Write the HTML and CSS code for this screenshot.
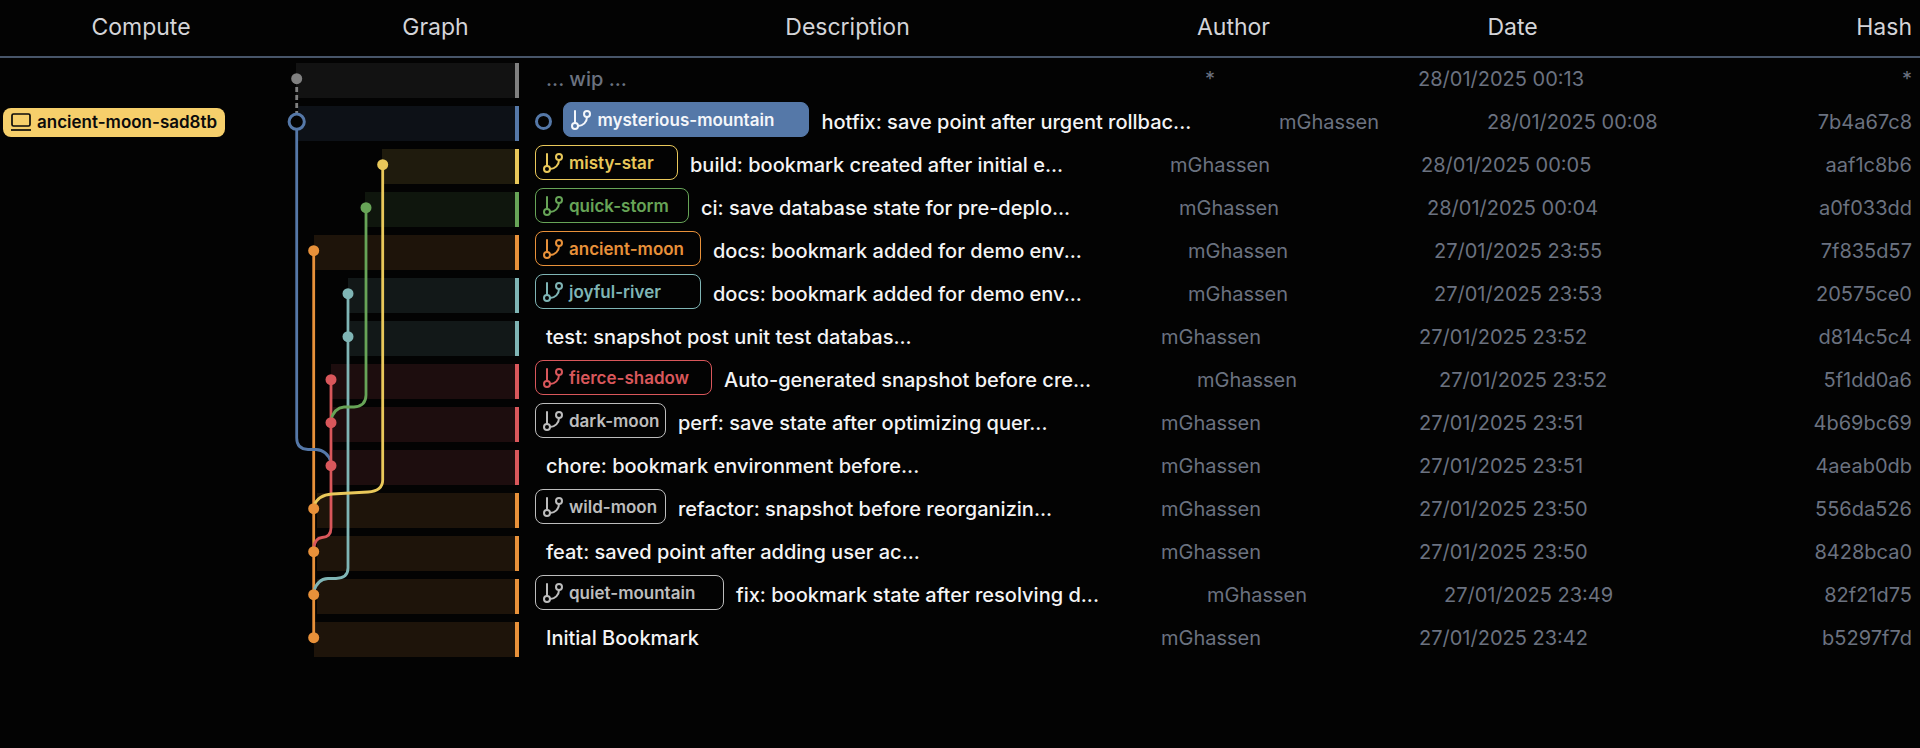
FILE: index.html
```html
<!DOCTYPE html>
<html lang="en">
<head>
<meta charset="utf-8">
<title>Bookmarks</title>
<link rel="stylesheet" href="styles.css">
</head>
<body>
<svg class="defs" width="0" height="0">
  <symbol id="branch" viewBox="0 0 24 24"><path d="M6 3v12"/><circle cx="18" cy="6" r="3"/><circle cx="6" cy="18" r="3"/><path d="M18 9a9 9 0 0 1-9 9"/></symbol>
  <symbol id="laptop" viewBox="0 0 24 24"><rect x="3" y="4" width="18" height="12" rx="1.5"/><path d="M2 20h20"/></symbol>
</svg>
<header class="head">
  <div class="h-compute">Compute</div>
  <div class="h-graph">Graph</div>
  <div class="h-desc">Description</div>
  <div class="h-author">Author</div>
  <div class="h-date">Date</div>
  <div class="h-hash">Hash</div>
</header>
<main class="table">
  <svg class="edges" width="520" height="700" viewBox="0 0 520 700" fill="none">
    <path class="s-orange" d="M313.7 251V638"/>
    <path class="s-gray dash" d="M296.7 79V114"/>
    <path class="s-blue" d="M296.7 122V438Q296.7 449 308 449.5H316Q327 450 331 462"/>
    <path class="s-red" d="M331 380V528Q331 537 322 537.5Q315 538 313.7 548"/>
    <path class="s-teal" d="M348 294V568Q348 578 336 578.5H328Q317 579 313.7 592"/>
    <path class="s-green" d="M366 208V395Q366 406 354 407H344Q334 408 331 420"/>
    <path class="s-yellow" d="M382.7 165V480Q382.7 491 368 492L332 494Q318 495 313.7 506"/>
    <circle class="n-gray" cx="296.7" cy="78.7" r="5.5"/>
    <circle class="ring" cx="296.7" cy="121.7" r="7.6"/>
    <circle class="n-yellow" cx="382.7" cy="164.7" r="5.5"/>
    <circle class="n-green" cx="366" cy="207.7" r="5.5"/>
    <circle class="n-orange" cx="313.7" cy="250.7" r="5.5"/>
    <circle class="n-teal" cx="348" cy="293.7" r="5.5"/>
    <circle class="n-teal" cx="348" cy="336.7" r="5.5"/>
    <circle class="n-red" cx="331" cy="379.7" r="5.5"/>
    <circle class="n-red" cx="331" cy="422.7" r="5.5"/>
    <circle class="n-red" cx="331" cy="465.7" r="5.5"/>
    <circle class="n-orange" cx="313.7" cy="508.7" r="5.5"/>
    <circle class="n-orange" cx="313.7" cy="551.7" r="5.5"/>
    <circle class="n-orange" cx="313.7" cy="594.7" r="5.5"/>
    <circle class="n-orange" cx="313.7" cy="637.7" r="5.5"/>
  </svg>

  <div class="row gray wip">
    <div class="compute"></div>
    <div class="graph"><div class="bar" style="width:223px"></div></div>
    <div class="desc" style="width:686px"><span class="msg">... wip ...</span></div>
    <div class="author star" style="width:213px">*</div>
    <div class="date">28/01/2025 00:13</div>
    <div class="hash star">*</div>
  </div>
  <div class="row blue">
    <div class="compute"><span class="badge"><svg class="ico-l"><use href="#laptop"/></svg>ancient-moon-sad8tb</span></div>
    <div class="graph"><div class="bar" style="width:221px"></div></div>
    <div class="desc" style="width:760px"><span class="dot"></span><span class="tag solid" style="width:246px"><svg class="ico"><use href="#branch"/></svg>mysterious-mountain</span><span class="msg">hotfix: save point after urgent rollbac...</span></div>
    <div class="author" style="width:208px">mGhassen</div>
    <div class="date">28/01/2025 00:08</div>
    <div class="hash">7b4a67c8</div>
  </div>
  <div class="row yellow">
    <div class="compute"></div>
    <div class="graph"><div class="bar" style="width:137px"></div></div>
    <div class="desc" style="width:651px"><span class="tag" style="width:143px"><svg class="ico"><use href="#branch"/></svg>misty-star</span><span class="msg">build: bookmark created after initial e...</span></div>
    <div class="author" style="width:251px">mGhassen</div>
    <div class="date">28/01/2025 00:05</div>
    <div class="hash">aaf1c8b6</div>
  </div>
  <div class="row green">
    <div class="compute"></div>
    <div class="graph"><div class="bar" style="width:154px"></div></div>
    <div class="desc" style="width:660px"><span class="tag" style="width:154px"><svg class="ico"><use href="#branch"/></svg>quick-storm</span><span class="msg">ci: save database state for pre-deplo...</span></div>
    <div class="author" style="width:248px">mGhassen</div>
    <div class="date">28/01/2025 00:04</div>
    <div class="hash">a0f033dd</div>
  </div>
  <div class="row orange">
    <div class="compute"></div>
    <div class="graph"><div class="bar" style="width:205px"></div></div>
    <div class="desc" style="width:669px"><span class="tag" style="width:166px"><svg class="ico"><use href="#branch"/></svg>ancient-moon</span><span class="msg">docs: bookmark added for demo env...</span></div>
    <div class="author" style="width:246px">mGhassen</div>
    <div class="date">27/01/2025 23:55</div>
    <div class="hash">7f835d57</div>
  </div>
  <div class="row teal">
    <div class="compute"></div>
    <div class="graph"><div class="bar" style="width:171px"></div></div>
    <div class="desc" style="width:669px"><span class="tag" style="width:166px"><svg class="ico"><use href="#branch"/></svg>joyful-river</span><span class="msg">docs: bookmark added for demo env...</span></div>
    <div class="author" style="width:246px">mGhassen</div>
    <div class="date">27/01/2025 23:53</div>
    <div class="hash">20575ce0</div>
  </div>
  <div class="row teal">
    <div class="compute"></div>
    <div class="graph"><div class="bar" style="width:169px"></div></div>
    <div class="desc plain" style="width:642px"><span class="msg">test: snapshot post unit test databas...</span></div>
    <div class="author" style="width:258px">mGhassen</div>
    <div class="date">27/01/2025 23:52</div>
    <div class="hash">d814c5c4</div>
  </div>
  <div class="row red">
    <div class="compute"></div>
    <div class="graph"><div class="bar" style="width:188px"></div></div>
    <div class="desc" style="width:678px"><span class="tag" style="width:177px"><svg class="ico"><use href="#branch"/></svg>fierce-shadow</span><span class="msg">Auto-generated snapshot before cre...</span></div>
    <div class="author" style="width:242px">mGhassen</div>
    <div class="date">27/01/2025 23:52</div>
    <div class="hash">5f1dd0a6</div>
  </div>
  <div class="row red">
    <div class="compute"></div>
    <div class="graph"><div class="bar" style="width:186px"></div></div>
    <div class="desc" style="width:642px"><span class="tag mono" style="width:131px"><svg class="ico"><use href="#branch"/></svg>dark-moon</span><span class="msg">perf: save state after optimizing quer...</span></div>
    <div class="author" style="width:258px">mGhassen</div>
    <div class="date">27/01/2025 23:51</div>
    <div class="hash">4b69bc69</div>
  </div>
  <div class="row red">
    <div class="compute"></div>
    <div class="graph"><div class="bar" style="width:186px"></div></div>
    <div class="desc plain" style="width:642px"><span class="msg">chore: bookmark environment before...</span></div>
    <div class="author" style="width:258px">mGhassen</div>
    <div class="date">27/01/2025 23:51</div>
    <div class="hash">4aeab0db</div>
  </div>
  <div class="row orange">
    <div class="compute"></div>
    <div class="graph"><div class="bar" style="width:202px"></div></div>
    <div class="desc" style="width:642px"><span class="tag mono" style="width:131px"><svg class="ico"><use href="#branch"/></svg>wild-moon</span><span class="msg">refactor: snapshot before reorganizin...</span></div>
    <div class="author" style="width:258px">mGhassen</div>
    <div class="date">27/01/2025 23:50</div>
    <div class="hash">556da526</div>
  </div>
  <div class="row orange">
    <div class="compute"></div>
    <div class="graph"><div class="bar" style="width:202px"></div></div>
    <div class="desc plain" style="width:642px"><span class="msg">feat: saved point after adding user ac...</span></div>
    <div class="author" style="width:258px">mGhassen</div>
    <div class="date">27/01/2025 23:50</div>
    <div class="hash">8428bca0</div>
  </div>
  <div class="row orange">
    <div class="compute"></div>
    <div class="graph"><div class="bar" style="width:202px"></div></div>
    <div class="desc" style="width:688px"><span class="tag mono" style="width:189px"><svg class="ico"><use href="#branch"/></svg>quiet-mountain</span><span class="msg">fix: bookmark state after resolving d...</span></div>
    <div class="author" style="width:237px">mGhassen</div>
    <div class="date">27/01/2025 23:49</div>
    <div class="hash">82f21d75</div>
  </div>
  <div class="row orange">
    <div class="compute"></div>
    <div class="graph"><div class="bar" style="width:205px"></div></div>
    <div class="desc plain" style="width:642px"><span class="msg">Initial Bookmark</span></div>
    <div class="author" style="width:258px">mGhassen</div>
    <div class="date">27/01/2025 23:42</div>
    <div class="hash">b5297f7d</div>
  </div>
</main>
</body>
</html>
```
FILE: styles.css
```css
* { box-sizing: border-box; }
html, body { margin: 0; height: 100%; }
body {
  background: #030303;
  color: #fff;
  font-family: Inter, "Liberation Sans", sans-serif;
  overflow: hidden;
}
.defs { position: absolute; }

.head {
  display: grid;
  grid-template-columns: 282px 307px 517px 255px 303px 1fr;
  align-items: center;
  height: 58px;
  padding: 0 8px 3px 0;
  border-bottom: 2px solid #475569;
  margin-bottom: 1px;
  font-size: 23px;
  color: #d4d4d8;
  text-align: center;
}
.h-hash { text-align: right; }

.table { position: relative; }
.edges { position: absolute; left: 0; top: -59px; z-index: 1; }
.edges path { stroke-width: 2.8; }
.dash { stroke-dasharray: 5 3; }
.s-orange { stroke: #e8913a; }
.s-gray { stroke: #808080; }
.s-blue { stroke: #5578a8; }
.s-red { stroke: #d9575b; }
.s-teal { stroke: #7fb5b5; }
.s-green { stroke: #67a457; }
.s-yellow { stroke: #e9c85a; }
.n-orange { fill: #e8913a; }
.n-gray { fill: #808080; }
.n-red { fill: #d9575b; }
.n-teal { fill: #7fb5b5; }
.n-green { fill: #67a457; }
.n-yellow { fill: #e9c85a; }
.ring { fill: #030303; stroke: #5578a8; stroke-width: 3; }

.gray { --c: #808080; }
.blue { --c: #5578a8; }
.yellow { --c: #e9c85a; }
.green { --c: #67a457; }
.orange { --c: #e8913a; }
.teal { --c: #7fb5b5; }
.red { --c: #d9575b; }

.row {
  display: flex;
  height: 43px;
  padding-right: 8px;
  font-size: 20px;
}
.compute {
  width: 281px;
  height: 38px;
  padding: 2px 0 0 3px;
  display: flex;
  align-items: center;
}
.graph {
  width: 238px;
  padding-top: 4px;
  display: flex;
  justify-content: flex-end;
}
.bar {
  height: 35px;
  border-right: 4.5px solid var(--c);
  background: color-mix(in srgb, var(--c) 12%, #030303);
}
.desc {
  height: 39px;
  padding-left: 15.5px;
  display: flex;
  align-items: center;
  gap: 12.5px;
  flex: none;
}
.desc.plain, .wip .desc { padding-left: 27px; }
.msg { font-weight: 500; white-space: nowrap; color: #f4f4f5; }
.wip .msg { color: #6b7280; }
.author, .date, .hash {
  height: 39px;
  display: flex;
  align-items: center;
  color: #6b7280;
  white-space: nowrap;
}
.author { flex: none; }
.date { flex: 1; }
.hash { justify-content: flex-end; }

.badge {
  display: inline-flex;
  align-items: center;
  gap: 4px;
  width: 222px;
  height: 29px;
  padding-left: 6px;
  border-radius: 8px;
  background: #f6cf6b;
  color: #0b0b0b;
  font-size: 17px;
  font-weight: 600;
  white-space: nowrap;
}
.ico-l {
  width: 24px;
  height: 24px;
  flex: none;
  fill: none;
  stroke: #0b0b0b;
  stroke-width: 1.7;
}
.tag {
  display: inline-flex;
  align-items: center;
  gap: 4.5px;
  flex: none;
  height: 34.5px;
  margin-top: -4px;
  padding-left: 5px;
  border: 1.8px solid var(--c);
  border-radius: 8px;
  color: var(--c);
  font-size: 17px;
  font-weight: 600;
  white-space: nowrap;
}
.tag.mono { --c: #bdbdbd; }
.tag.solid {
  background: var(--c);
  color: #f4f6fa;
}
.ico {
  width: 24px;
  height: 24px;
  fill: none;
  stroke: currentColor;
  stroke-width: 2;
  stroke-linecap: round;
  flex: none;
}
.dot {
  flex: none;
  width: 17px;
  height: 17px;
  margin-right: -1px;
  border: 3px solid var(--c);
  border-radius: 50%;
}
```
